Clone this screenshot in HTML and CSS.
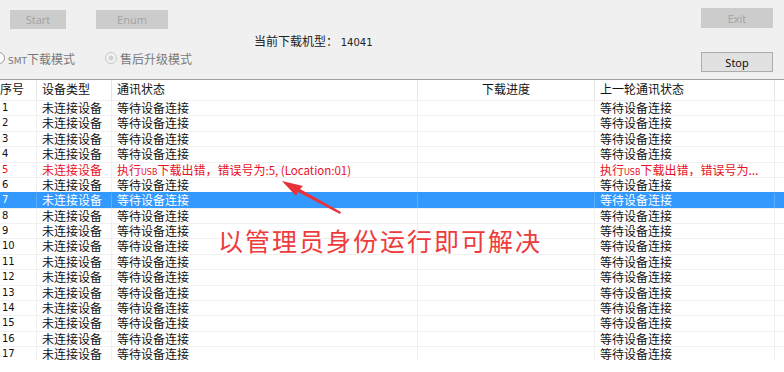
FILE: index.html
```html
<!doctype html>
<html>
<head>
<meta charset="utf-8">
<title>下载工具</title>
<link rel="stylesheet" href="styles.css">
</head>
<body>
<div class="top">
  <div class="left">
    <div class="btns">
      <span class="btn off start">Start</span>
      <span class="btn off enum">Enum</span>
    </div>
    <div class="model">当前下载机型： <b>14041</b></div>
    <div class="modes">
      <label class="radio"><i></i><span><small>SMT</small>下载模式</span></label>
      <label class="radio dis"><i></i><span>售后升级模式</span></label>
    </div>
  </div>
  <div class="right">
    <span class="btn off wide">Exit</span>
    <span class="btn wide stop">Stop</span>
  </div>
</div>
<div class="grid">
  <div class="row head"><span>序号</span><span>设备类型</span><span>通讯状态</span><span class="mid">下载进度</span><span>上一轮通讯状态</span><span></span></div>
  <div class="row"><span class="n">1</span><span>未连接设备</span><span>等待设备连接</span><span></span><span>等待设备连接</span><span></span></div>
  <div class="row"><span class="n">2</span><span>未连接设备</span><span>等待设备连接</span><span></span><span>等待设备连接</span><span></span></div>
  <div class="row"><span class="n">3</span><span>未连接设备</span><span>等待设备连接</span><span></span><span>等待设备连接</span><span></span></div>
  <div class="row"><span class="n">4</span><span>未连接设备</span><span>等待设备连接</span><span></span><span>等待设备连接</span><span></span></div>
  <div class="row err"><span class="n">5</span><span>未连接设备</span><span>执行<small>USB</small>下载出错，错误号为<em>:5, (Location:01)</em></span><span></span><span>执行<small>USB</small>下载出错，错误号为...</span><span></span></div>
  <div class="row"><span class="n">6</span><span>未连接设备</span><span>等待设备连接</span><span></span><span>等待设备连接</span><span></span></div>
  <div class="row sel"><span class="n">7</span><span>未连接设备</span><span>等待设备连接</span><span></span><span>等待设备连接</span><span></span></div>
  <div class="row"><span class="n">8</span><span>未连接设备</span><span>等待设备连接</span><span></span><span>等待设备连接</span><span></span></div>
  <div class="row"><span class="n">9</span><span>未连接设备</span><span>等待设备连接</span><span></span><span>等待设备连接</span><span></span></div>
  <div class="row"><span class="n">10</span><span>未连接设备</span><span>等待设备连接</span><span></span><span>等待设备连接</span><span></span></div>
  <div class="row"><span class="n">11</span><span>未连接设备</span><span>等待设备连接</span><span></span><span>等待设备连接</span><span></span></div>
  <div class="row"><span class="n">12</span><span>未连接设备</span><span>等待设备连接</span><span></span><span>等待设备连接</span><span></span></div>
  <div class="row"><span class="n">13</span><span>未连接设备</span><span>等待设备连接</span><span></span><span>等待设备连接</span><span></span></div>
  <div class="row"><span class="n">14</span><span>未连接设备</span><span>等待设备连接</span><span></span><span>等待设备连接</span><span></span></div>
  <div class="row"><span class="n">15</span><span>未连接设备</span><span>等待设备连接</span><span></span><span>等待设备连接</span><span></span></div>
  <div class="row"><span class="n">16</span><span>未连接设备</span><span>等待设备连接</span><span></span><span>等待设备连接</span><span></span></div>
  <div class="row"><span class="n">17</span><span>未连接设备</span><span>等待设备连接</span><span></span><span>等待设备连接</span><span></span></div>
  <svg class="arrow" width="80" height="50" viewBox="0 0 80 50">
    <polygon points="6,7 27,12 24,15 65,38 64,40 22,18 20,22" fill="#e8323a"/>
  </svg>
  <div class="note">以管理员身份运行即可解决</div>
</div>
</body>
</html>
```
FILE: styles.css
```css
body{
	margin:0;
	background:#fff;
	font-family:"Noto Sans CJK SC","Microsoft YaHei",sans-serif;
	font-size:12px;
	color:#000;
}
.top{
	height:79px;
	background:#f0f0f0;
	border-bottom:1px solid #a0a0a0;
	display:flex;
	justify-content:space-between;
}
.left{
	padding:10px 0 0 10px;
	width:400px;
}
.btns{
	display:flex;
	gap:30px;
}
.btn{
	display:flex;
	align-items:center;
	justify-content:center;
	height:19px;
	box-sizing:border-box;
	font-family:"Open Sans","DejaVu Sans",sans-serif;
	font-size:11px;
	background:#e1e1e1;
	border:1px solid #adadad;
	color:#000;
}
.btn.off{
	background:#cccccc;
	border-color:#cccccc;
	color:#a3a3a3;
}
.start{width:56px;}
.enum{width:72px;}
.model{
	margin:4px 0 0 244px;
	height:16px;
	line-height:16px;
	font-size:12px;
	color:#222;
}
.model b{
	font-family:"DejaVu Sans",sans-serif;
	font-weight:normal;
	font-size:10px;
}
.modes{
	display:flex;
	gap:30px;
	margin:1px 0 0 -17px;
	height:16px;
	align-items:center;
}
.radio{
	display:flex;
	align-items:center;
	gap:3px;
	color:#7a7a7a;
	font-size:12px;
}
.radio small{
	font-family:"DejaVu Sans",sans-serif;
	font-size:9px;
}
.radio i{
	width:10px;
	height:10px;
	border:1px solid #9a9a9a;
	border-radius:50%;
	background:#fff;
}
.radio.dis i{
	border-color:#c8c8c8;
	background:radial-gradient(circle,#d0d0d0 0,#d0d0d0 2px,#f4f4f4 3px);
}
.right{
	width:72px;
	padding:8px 11px 0 0;
	display:flex;
	flex-direction:column;
	gap:24px;
}
.wide{width:72px;height:20px;}
.grid{
	position:relative;
}
.row{
	display:grid;
	grid-template-columns:36px 75px 306px 177px 180px 1fr;
	height:15.375px;
	box-sizing:border-box;
	border-top:1px solid #f0f0f0;
	line-height:14px;
	color:#111;
}
.row span{
	padding-left:5px;
	border-left:1px solid #f0f0f0;
	white-space:nowrap;
}
.row span:first-child{border-left:0;padding-left:2px;}
.row.head{
	height:20px;
	border-top:0;
	line-height:18px;
}
.row.head span{border-left-color:#e5e5e5;}
.row.head span:first-child{padding-left:0;}
.row.head .mid{text-align:center;padding:0;}
.n{
	font-family:"DejaVu Sans",sans-serif;
	font-size:10px;
}
.row small{
	font-family:"DejaVu Sans",sans-serif;
	font-size:8px;
}
.row em{
	font-style:normal;
	font-size:11.5px;
}
.row.err{color:#e81123;}
.row.sel{
	background:#3399ff;
	color:#fff;
	border-top-color:#3399ff;
}
.row.sel span{border-left-color:#5aaeff;}
.arrow{
	position:absolute;
	left:276px;
	top:94px;
}
.note{
	position:absolute;
	left:218px;
	top:145px;
	font-size:25px;
	letter-spacing:2px;
	color:#ee3b3b;
	line-height:30px;
}
```
